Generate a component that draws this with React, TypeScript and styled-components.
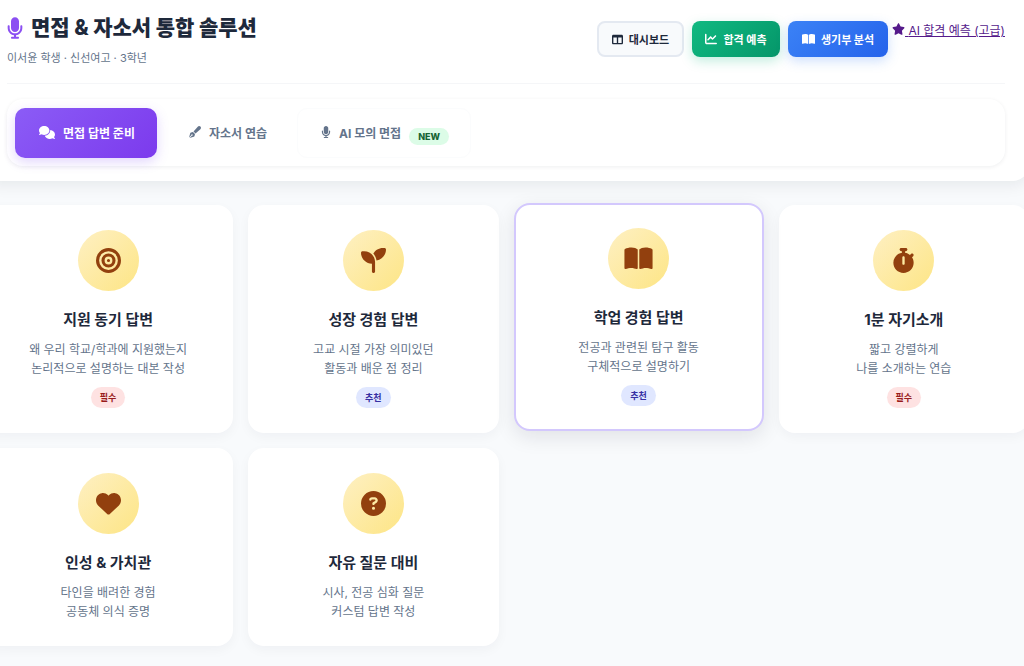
import React from "react";
import styled, { createGlobalStyle, css } from "styled-components";
import {
  FaMicrophone,
  FaTableColumns,
  FaChartLine,
  FaBookOpen,
  FaStar,
  FaComments,
  FaPenFancy,
  FaBullseye,
  FaSeedling,
  FaStopwatch,
  FaHeart,
  FaCircleQuestion,
} from "react-icons/fa6";

const GlobalStyle = createGlobalStyle`
  *, *::before, *::after { box-sizing: border-box; }
  body {
    margin: 0;
    background: #f8fafc;
    color: #1e293b;
    font-family: Inter, "Noto Sans CJK KR", sans-serif;
    font-size: 12px;
    line-height: 20px;
    overflow-x: hidden;
  }
  button { font-family: inherit; cursor: pointer; }
  h1, h2, p { margin: 0; }
`;

const Shell = styled.div`
  overflow: hidden;
  min-height: 100vh;
`;

const Container = styled.div`
  margin: 0 -5px 0 -17px;
`;

const Icon = styled.span<{ $w: number; $h: number }>`
  display: inline-flex;
  flex: none;

  svg {
    width: ${(p) => p.$w}px;
    height: ${(p) => p.$h}px;
  }
`;

const Header = styled.header`
  padding: 10px 24px 15px;
  background: #ffffff;
  border-radius: 0 0 16px 16px;
  box-shadow: 0 4px 16px rgba(15, 23, 42, 0.08);
`;

const TopBar = styled.div`
  display: flex;
  align-items: center;
  justify-content: space-between;
  padding-bottom: 15px;
  border-bottom: 1px solid #f5f6f8;
`;

const Title = styled.h1`
  display: flex;
  align-items: center;
  gap: 8px;
  font-size: 21px;
  font-weight: 800;
  line-height: 36px;
`;

const Subtitle = styled.p`
  margin-top: 2px;
  font-size: 11px;
  color: #64748b;
`;

const Actions = styled.div`
  display: flex;
  gap: 4px;
`;

const ButtonGroup = styled.div`
  display: flex;
  gap: 8px;
`;

const tones = {
  plain: css`
    color: #1e293b;
    background: #f8fafc;
    border: 2px solid #e4e9f1;
  `,
  green: css`
    color: #ffffff;
    background: linear-gradient(135deg, #10b981, #059669);
    border: 0;
    box-shadow: 0 4px 12px rgba(16, 185, 129, 0.25);
  `,
  blue: css`
    color: #ffffff;
    background: linear-gradient(135deg, #3b82f6, #2563eb);
    border: 0;
    box-shadow: 0 4px 12px rgba(59, 130, 246, 0.25);
  `,
};

const ActionButton = styled.button<{ $tone: keyof typeof tones; $width: number }>`
  display: flex;
  align-items: center;
  justify-content: center;
  gap: 6px;
  min-width: ${(p) => p.$width}px;
  height: 36px;
  padding: 0;
  border-radius: 8px;
  font-size: 11px;
  font-weight: 700;
  white-space: nowrap;
  ${(p) => tones[p.$tone]}
`;

const AdvancedLink = styled.a`
  align-self: flex-start;
  color: #551a8b;
  font-size: 12px;
  white-space: nowrap;

  svg {
    vertical-align: -1px;
  }
`;

const Tabs = styled.nav`
  display: flex;
  gap: 8px;
  margin-top: 15px;
  padding: 9px 8px 8px;
  border-radius: 16px;
  background: #ffffff;
  box-shadow: 0 1px 4px rgba(15, 23, 42, 0.07);
`;

const Tab = styled.button<{ $active?: boolean; $outlined?: boolean }>`
  display: flex;
  align-items: center;
  gap: 8px;
  height: 50px;
  padding: 0 21px 2px 23px;
  border: 1px solid ${(p) => (p.$outlined ? "#fbfcfd" : "transparent")};
  border-radius: 10px;
  background: transparent;
  color: #64748b;
  font-size: 12px;
  font-weight: 700;
  white-space: nowrap;

  ${(p) =>
    p.$active &&
    css`
      color: #ffffff;
      background: linear-gradient(135deg, #8b5cf6, #7c3aed) border-box;
      box-shadow: 0 4px 12px rgba(139, 92, 246, 0.25);
    `}
`;

const NewBadge = styled.span`
  margin-top: 8px;
  padding: 0 9px;
  border-radius: 9px;
  background: #dcfce7;
  color: #166534;
  font-size: 9px;
  font-weight: 800;
  line-height: 17px;
`;

const Grid = styled.main`
  display: grid;
  grid-template-columns: repeat(4, minmax(0, 1fr));
  align-items: start;
  gap: 15px;
  margin-top: 24px;
`;

const Card = styled.article<{ $raised?: boolean }>`
  display: flex;
  flex-direction: column;
  align-items: center;
  padding: 23px;
  border: 2px solid #ffffff;
  border-radius: 16px;
  background: #ffffff;
  box-shadow: 0 4px 12px rgba(15, 23, 42, 0.04);
  text-align: center;

  ${(p) =>
    p.$raised &&
    css`
      border-color: #d3c8fd;
      box-shadow: 0 6px 20px rgba(15, 23, 42, 0.1);
      transform: translateY(-2px);
    `}
`;

const IconCircle = styled.div`
  display: grid;
  place-items: center;
  width: 61px;
  height: 61px;
  border-radius: 50%;
  background: linear-gradient(135deg, #fef0c3, #fde585);
  color: #92400e;
`;

const CardTitle = styled.h2`
  margin-top: 17px;
  font-size: 15px;
  font-weight: 700;
  line-height: 24px;
`;

const CardText = styled.p`
  margin-top: 8px;
  color: #64748b;
  font-size: 12px;
  line-height: 19px;
  white-space: pre-line;
`;

const CardBadge = styled.span<{ $required: boolean }>`
  margin-top: 9px;
  padding: 0 9px;
  border-radius: 11px;
  font-size: 9px;
  font-weight: 700;
  line-height: 21px;
  color: ${(p) => (p.$required ? "#991b1b" : "#3730a3")};
  background: ${(p) => (p.$required ? "#fee2e2" : "#e0e7ff")};
`;

const cards = [
  { icon: <FaBullseye />, title: "지원 동기 답변", text: "왜 우리 학교/학과에 지원했는지\n논리적으로 설명하는 대본 작성", badge: "필수" },
  { icon: <FaSeedling />, title: "성장 경험 답변", text: "고교 시절 가장 의미있던\n활동과 배운 점 정리", badge: "추천" },
  { icon: <FaBookOpen />, title: "학업 경험 답변", text: "전공과 관련된 탐구 활동\n구체적으로 설명하기", badge: "추천", raised: true, iconWidth: 29 },
  { icon: <FaStopwatch />, title: "1분 자기소개", text: "짧고 강렬하게\n나를 소개하는 연습", badge: "필수" },
  { icon: <FaHeart />, title: "인성 & 가치관", text: "타인을 배려한 경험\n공동체 의식 증명" },
  { icon: <FaCircleQuestion />, title: "자유 질문 대비", text: "시사, 전공 심화 질문\n커스텀 답변 작성" },
];

export default function App() {
  return (
    <Shell>
      <GlobalStyle />
      <Container>
        <Header>
          <TopBar>
            <div>
              <Title>
                <Icon $w={16} $h={22}>
                  <FaMicrophone color="#8b4ff2" />
                </Icon>
                면접 & 자소서 통합 솔루션
              </Title>
              <Subtitle>이서윤 학생 · 신선여고 · 3학년</Subtitle>
            </div>
            <Actions>
              <ButtonGroup>
                <ActionButton type="button" $tone="plain" $width={87}>
                  <Icon $w={11} $h={11}>
                    <FaTableColumns />
                  </Icon>
                  대시보드
                </ActionButton>
                <ActionButton type="button" $tone="green" $width={88}>
                  <Icon $w={12} $h={12}>
                    <FaChartLine />
                  </Icon>
                  합격 예측
                </ActionButton>
                <ActionButton type="button" $tone="blue" $width={100}>
                  <Icon $w={13} $h={12}>
                    <FaBookOpen />
                  </Icon>
                  생기부 분석
                </ActionButton>
              </ButtonGroup>
              <AdvancedLink href="#advanced">
                <Icon $w={13} $h={12}>
                  <FaStar />
                </Icon>{" "}
                AI 합격 예측 (고급)
              </AdvancedLink>
            </Actions>
          </TopBar>
          <Tabs>
            <Tab type="button" $active>
              <Icon $w={16} $h={13}>
                <FaComments />
              </Icon>
              면접 답변 준비
            </Tab>
            <Tab type="button">
              <Icon $w={12} $h={12}>
                <FaPenFancy />
              </Icon>
              자소서 연습
            </Tab>
            <Tab type="button" $outlined>
              <Icon $w={10} $h={12}>
                <FaMicrophone />
              </Icon>
              AI 모의 면접
              <NewBadge>NEW</NewBadge>
            </Tab>
          </Tabs>
        </Header>
        <Grid>
          {cards.map((c) => (
            <Card key={c.title} $raised={c.raised}>
              <IconCircle>
                <Icon $w={c.iconWidth ?? 25} $h={25}>
                  {c.icon}
                </Icon>
              </IconCircle>
              <CardTitle>{c.title}</CardTitle>
              <CardText>{c.text}</CardText>
              {c.badge && <CardBadge $required={c.badge === "필수"}>{c.badge}</CardBadge>}
            </Card>
          ))}
        </Grid>
      </Container>
    </Shell>
  );
}
